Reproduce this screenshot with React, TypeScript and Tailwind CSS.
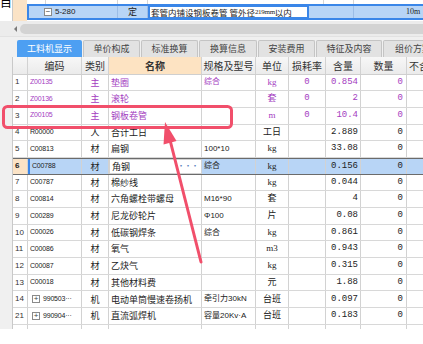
import React from 'react';

// 工料机显示 grid, selected line 6, with the red callout on line 3

const CJK = { fontFamily: '"Noto Sans CJK SC", "Liberation Sans", sans-serif' };

type Row = {
  no: string;
  code: string;
  plus?: boolean;
  kind: string;
  name: string;
  spec: string;
  unit: string;
  loss: string;
  qty: string;
  main?: boolean;
  selected?: boolean;
};

const rows: Row[] = [
  { no: '1', code: 'Z00135', kind: '主', name: '垫圈', spec: '综合', unit: 'kg', loss: '0', qty: '0.854', main: true },
  { no: '2', code: 'Z00136', kind: '主', name: '滚轮', spec: '', unit: '套', loss: '0', qty: '2', main: true },
  { no: '3', code: 'Z00105', kind: '主', name: '钢板卷管', spec: '', unit: 'm', loss: '0', qty: '10.4', main: true },
  { no: '4', code: 'R00000', kind: '人', name: '合计工日', spec: '', unit: '工日', loss: '', qty: '2.889' },
  { no: '5', code: 'C00813', kind: '材', name: '扁钢', spec: '100*10', unit: 'kg', loss: '', qty: '33.08' },
  { no: '6', code: 'C00788', kind: '材', name: '角钢', spec: '综合', unit: 'kg', loss: '', qty: '0.156', selected: true },
  { no: '7', code: 'C00787', kind: '材', name: '棉纱线', spec: '', unit: 'kg', loss: '', qty: '0.044' },
  { no: '8', code: 'C00814', kind: '材', name: '六角螺栓带螺母', spec: 'M16*90', unit: '套', loss: '', qty: '4' },
  { no: '9', code: 'C00289', kind: '材', name: '尼龙砂轮片', spec: 'Φ100', unit: '片', loss: '', qty: '0.08' },
  { no: '10', code: 'C00026', kind: '材', name: '低碳钢焊条', spec: '综合', unit: 'kg', loss: '', qty: '0.861' },
  { no: '11', code: 'C00086', kind: '材', name: '氧气', spec: '', unit: 'm3', loss: '', qty: '0.943' },
  { no: '12', code: 'C00087', kind: '材', name: '乙炔气', spec: '', unit: 'kg', loss: '', qty: '0.315' },
  { no: '13', code: 'C00018', kind: '材', name: '其他材料费', spec: '', unit: '元', loss: '', qty: '1.88' },
  { no: '14', code: '990503···', plus: true, kind: '机', name: '电动单筒慢速卷扬机', spec: '牵引力30kN', unit: '台班', loss: '', qty: '0.097' },
  { no: '21', code: '990904···', plus: true, kind: '机', name: '直流弧焊机', spec: '容量20Kv·A', unit: '台班', loss: '', qty: '0.183' },
];

const tabs: [string, number][] = [
  ['工料机显示', 65],
  ['单价构成', 57],
  ['标准换算', 57],
  ['换算信息', 58],
  ['安装费用', 57],
  ['特征及内容', 66],
  ['组价方案', 60],
];

function TreeBox({ sign }: { sign: string }) {
  return (
    <span className="inline-flex items-center justify-center w-[8px] h-[8px] border border-[#8a8a8a] bg-white text-[8px] leading-none text-[#444] mr-[3px]" style={{ fontFamily: '"Liberation Sans", sans-serif' }}>
      {sign}
    </span>
  );
}

function TopRow() {
  return (
    <div className="flex h-[21px] bg-white">
      <div className="w-[12px] overflow-hidden">
        <div className="text-[12px] leading-none text-black -mt-[4px]" style={CJK}>目</div>
      </div>
      <div className="w-[15px] bg-[#fbe3c6] border-l border-[#c9c9c9]" />
      <div className="flex-1 flex flex-col">
        <div className="h-[4px] flex">
          <div className="w-[19px] border-r border-[#d6d6d6]" />
          <div className="w-[72px] border-r border-[#d6d6d6]" />
          <div className="w-[30px] border-r border-[#d6d6d6]" />
          <div className="w-[176px] border-r border-[#d6d6d6]" />
          <div className="w-[30px] border-r border-[#d6d6d6]" />
          <div className="flex-1" />
        </div>
        <div className="h-[16px] flex items-stretch bg-[#b8d5f6] border-y-2 border-l-2 border-[#3a86e8] text-[9px] text-[#222]">
          <div className="w-[89px] flex items-center pl-[15px] border-r border-[#9cbde6]" style={{ fontFamily: '"Liberation Sans", sans-serif' }}>
            <TreeBox sign="−" />
            <span className="text-[8px]">5-280</span>
          </div>
          <div className="w-[30px] flex items-center justify-center border-r border-[#9cbde6]" style={CJK}>定</div>
          <div className="w-[161px] flex items-center bg-white border-2 border-[#3a86e8] -my-[1px] pl-[1px] whitespace-nowrap overflow-hidden text-[8.5px]" style={CJK}>
            套管内铺设钢板卷管 管外径<span className="text-[7px] tracking-[-0.3px]" style={{ fontFamily: '"Liberation Serif", serif' }}>219mm</span>以内
          </div>
          <div className="w-[45px] border-r border-[#9cbde6]" />
          <div className="w-[46px]" />
          <div className="flex-1 flex items-center pl-[6px] text-[8px]" style={{ fontFamily: '"Liberation Serif", serif' }}>10m</div>
        </div>
      </div>
    </div>
  );
}

function ScrollBand() {
  return (
    <div className="h-[16px] flex items-center bg-[#ececec] border-b border-[#e2e2e2]">
      <div className="w-[20px] flex justify-end pr-[3px]">
        <span className="w-0 h-0 border-y-[3px] border-y-transparent border-r-[3px] border-r-[#7a7a7a]" />
      </div>
      <div className="flex-1 h-[10px] rounded-l-[5px] bg-[#d3d3d3]" />
    </div>
  );
}

function Tabs() {
  return (
    <div className="h-[20px] pt-[3px] pl-[17px] flex gap-[1px] bg-[#f0f0f0]">
      {tabs.map(([label, w], i) => (
        <div
          key={label}
          className={
            i === 0
              ? 'shrink-0 h-[17px] flex items-center justify-center bg-[#4d9ff2] text-white text-[9px] rounded-t-[2px]'
              : 'shrink-0 h-[17px] flex items-center justify-center bg-[#e2e2e2] border border-b-0 border-[#c4c4c4] text-[#444] text-[9px] rounded-t-[2px]'
          }
          style={{ width: w, ...CJK }}
        >
          {label}
        </div>
      ))}
    </div>
  );
}

const cell = 'shrink-0 h-full flex items-center border-r border-[#d2d2d2] overflow-hidden whitespace-nowrap';

function Header() {
  return (
    <div className="h-[17.5px] flex bg-gradient-to-b from-[#f7f7f7] to-[#ebebeb] border-b border-[#cfcfcf] text-[10px] text-[#333]" style={CJK}>
      <div className={`${cell} w-[15px]`} />
      <div className={`${cell} w-[54px] justify-center`}>编码</div>
      <div className={`${cell} w-[27px] justify-center`}>类别</div>
      <div className={`${cell} w-[93px] justify-center bg-[#fde3c2] font-bold`}>名称</div>
      <div className={`${cell} w-[54px] justify-center`}>规格及型号</div>
      <div className={`${cell} w-[33px] justify-center`}>单位</div>
      <div className={`${cell} w-[37px] justify-center`}>损耗率</div>
      <div className={`${cell} w-[35px] justify-center`}>含量</div>
      <div className={`${cell} w-[46px] justify-center`}>数量</div>
      <div className={`${cell} w-[60px] pl-[2px]`}>不含税市场价</div>
    </div>
  );
}

function GridRow({ r }: { r: Row }) {
  const color = r.main ? 'text-[#a43cbf]' : 'text-[#222]';
  const sel = r.selected;
  const bg = sel ? 'bg-[#b8d5f6]' : 'bg-white';
  return (
    <div className={`h-[16.7px] flex ${color} ${sel ? 'border-y border-[#6b6b6b]' : 'border-b border-[#d8d8d8]'}`}>
      <div
        className={`${cell} w-[15px] pl-[2px] text-[8px] ${sel ? 'bg-[#fbe3c6] font-bold text-[#222]' : 'bg-white text-[#333]'}`}
        style={{ fontFamily: '"Liberation Sans", sans-serif' }}
      >
        {r.no}
      </div>
      <div
        className={`${cell} w-[54px] pl-[2px] text-[7px] tracking-[-0.2px] ${bg} ${sel ? 'border-l-2 border-l-[#3a86e8]' : ''}`}
        style={{ fontFamily: '"Liberation Sans", sans-serif' }}
      >
        {r.plus && <span className="ml-[2px]"><TreeBox sign="+" /></span>}
        {r.code}
      </div>
      <div className={`${cell} w-[27px] justify-center text-[9px] ${bg}`} style={CJK}>{r.kind}</div>
      {sel ? (
        <div className={`${cell} w-[93px] pl-[2px] justify-between bg-white border border-[#7a7a7a] text-[9px]`} style={CJK}>
          <span>{r.name}</span>
          <span className="pr-[3px] text-[#5a7fc0] text-[8px] tracking-[-1px]">···</span>
        </div>
      ) : (
        <div className={`${cell} w-[93px] pl-[2px] text-[9px] ${bg}`} style={CJK}>{r.name}</div>
      )}
      <div className={`${cell} w-[54px] pl-[2px] text-[8px] ${bg}`} style={{ fontFamily: '"Liberation Sans", "Noto Sans CJK SC", sans-serif' }}>{r.spec}</div>
      <div className={`${cell} w-[33px] justify-center text-[9px] ${bg}`} style={{ fontFamily: '"Liberation Serif", "Noto Sans CJK SC", serif' }}>{r.unit}</div>
      <div className={`${cell} w-[37px] justify-center text-[9px] ${bg}`} style={{ fontFamily: '"Liberation Mono", monospace' }}>{r.loss}</div>
      <div className={`${cell} w-[35px] justify-end pr-[2px] text-[9px] ${bg}`} style={{ fontFamily: '"Liberation Mono", monospace' }}>{r.qty}</div>
      <div className={`${cell} w-[46px] justify-end pr-[3px] text-[9px] ${bg}`} style={{ fontFamily: '"Liberation Mono", monospace' }}>0</div>
      <div className={`${cell} w-[60px] ${bg}`} />
    </div>
  );
}

function Callout() {
  return (
    <svg className="absolute inset-0 pointer-events-none" width="423" height="344" viewBox="0 0 423 344">
      <rect x="3.5" y="106.5" width="228" height="21" rx="4" fill="none" stroke="#f14f6b" strokeWidth="3" />
      <line x1="201" y1="262" x2="170" y2="140" stroke="#f14f6b" strokeWidth="3" strokeLinecap="round" />
      <polygon points="165,122 176.5,141 163.5,144.5" fill="#f14f6b" />
    </svg>
  );
}

export default function App() {
  return (
    <div className="relative w-[423px] h-[344px] overflow-hidden bg-white">
      <TopRow />
      <ScrollBand />
      <Tabs />
      <div className="flex bg-[#f0f0f0]">
        <div className="w-[12px] shrink-0" />
        <div className="flex-1 overflow-hidden border-l border-[#c9c9c9]">
          <Header />
          {rows.map((r) => (
            <GridRow key={r.no} r={r} />
          ))}
          <div className="h-[4px] flex bg-white">
            {[15, 54, 27, 93, 54, 33, 37, 35, 46, 60].map((w, i) => (
              <div key={i} className="shrink-0 h-full border-r border-[#d2d2d2]" style={{ width: w }} />
            ))}
          </div>
        </div>
      </div>
      <Callout />
    </div>
  );
}
